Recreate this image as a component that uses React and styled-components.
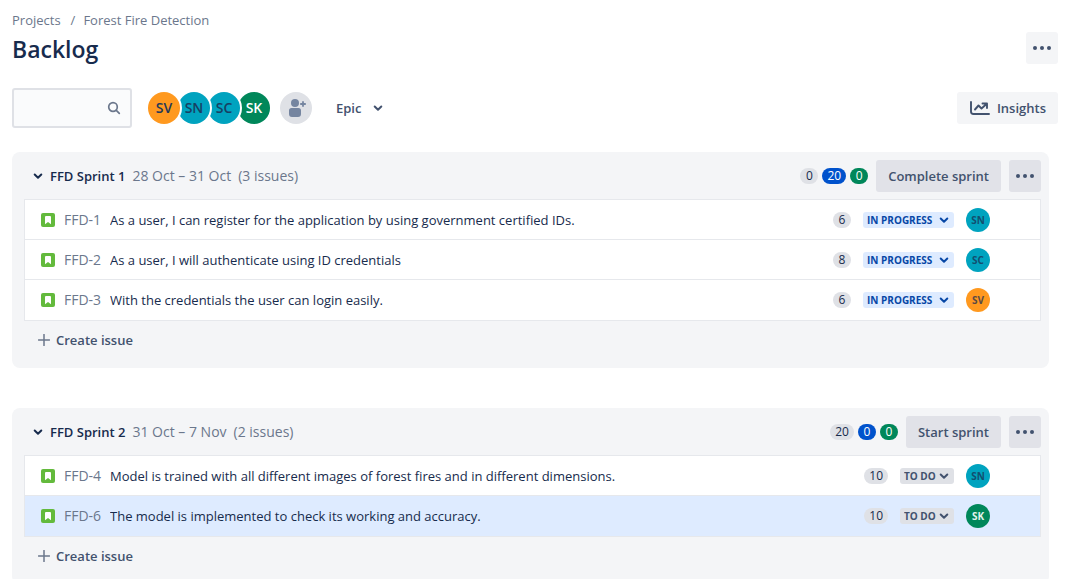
import React from "react";
import styled, { createGlobalStyle } from "styled-components";

const GlobalStyle = createGlobalStyle`
  * { box-sizing: border-box; }
  body {
    margin: 0;
    background: #ffffff;
    color: #172b4d;
    font-family: "Open Sans", "Noto Sans", sans-serif;
    font-size: 13px;
    line-height: 20px;
  }
  button, input, select { font: inherit; color: inherit; }
  a { color: inherit; text-decoration: none; }
  h1, h2, ul, ol, p { margin: 0; padding: 0; }
  ul, ol { list-style: none; }
`;

const Page = styled.main`
  height: 100vh;
  overflow-y: auto;
  scrollbar-width: none;
  padding: 10px 16px 24px 12px;
`;

const Crumbs = styled.ol`
  display: flex;
  color: #6b778c;

  li + li::before {
    content: "/";
    margin: 0 8px 0 10px;
  }
`;

const TitleRow = styled.div`
  display: flex;
  align-items: center;
  justify-content: space-between;
  margin-top: 2px;
`;

const Title = styled.h1`
  padding-top: 2px;
  font-size: 23px;
  line-height: 30px;
  font-weight: 600;
`;

const Button = styled.button`
  display: flex;
  align-items: center;
  justify-content: center;
  gap: ${(p) => p.$gap || 4}px;
  height: 32px;
  padding: 0 12px;
  border: 0;
  border-radius: 3px;
  background: ${(p) => (p.$subtle ? "#f4f5f7" : "#e1e2e8")};
  color: #42526e;
  font-weight: 600;
  white-space: nowrap;
`;

const IconButton = styled(Button)`
  width: 32px;
  padding: 0;
`;

const PlainButton = styled(Button)`
  background: transparent;
  padding: 0;
`;

const Toolbar = styled.div`
  display: flex;
  align-items: center;
  justify-content: space-between;
  margin-top: 24px;
`;

const Filters = styled.div`
  display: flex;
  align-items: center;
`;

const SearchBox = styled.label`
  display: flex;
  align-items: center;
  width: 120px;
  height: 40px;
  padding: 0 8px;
  border: 2px solid #dfe1e6;
  border-radius: 3px;
  background: #fafbfc;
  color: #6b778c;

  input {
    flex: 1;
    min-width: 0;
    border: 0;
    outline: 0;
    padding: 0;
    background: transparent;
  }
`;

const People = styled.ul`
  display: flex;
  isolation: isolate;
  margin: 0 10px 0 16px;

  li { position: relative; }
  li + li { margin-left: -2px; }
`;

const tones = {
  orange: { fill: "#ff991f", text: "#253858", smallText: "#5a4a45" },
  teal: { fill: "#00a3bf", text: "#173f63", smallText: "#124f70" },
  green: { fill: "#00875a", text: "#ffffff", smallText: "#e3f3ed" },
};

const Avatar = styled.span`
  display: flex;
  align-items: center;
  justify-content: center;
  width: ${(p) => (p.$small ? 24 : 32)}px;
  height: ${(p) => (p.$small ? 24 : 32)}px;
  border-radius: 50%;
  background: ${(p) => tones[p.$tone].fill};
  color: ${(p) => (p.$small ? tones[p.$tone].smallText : tones[p.$tone].text)};
  font-size: ${(p) => (p.$small ? 10 : 14)}px;
  font-weight: ${(p) => (p.$small ? 700 : 600)};
`;

const RingedAvatar = styled(Avatar)`
  box-shadow: 0 0 0 2px #ffffff;
`;

const AddPeople = styled.button`
  display: flex;
  align-items: center;
  justify-content: center;
  width: 32px;
  height: 32px;
  margin-right: 24px;
  padding: 0;
  border: 0;
  border-radius: 50%;
  background: #dfe1e6;
  color: #7585a0;
`;

const Sprints = styled.div`
  display: flex;
  flex-direction: column;
  gap: 40px;
  margin: 24px 9px 0 0;
`;

const Panel = styled.section`
  padding: 8px 8px 8px 12px;
  border-radius: 8px;
  background: #f4f5f7;
`;

const PanelHeader = styled.header`
  display: flex;
  align-items: center;
  gap: 8px;
  margin-bottom: 7px;
`;

const Toggle = styled.button`
  display: flex;
  align-items: center;
  justify-content: center;
  width: 20px;
  height: 20px;
  margin-left: 4px;
  padding: 0;
  border: 0;
  background: transparent;
`;

const Heading = styled.div`
  display: flex;
  flex: 1;
  gap: 7px;
  margin-left: -6px;
  color: #6b778c;
  font-size: 14px;
  white-space: nowrap;

  h2 {
    color: #172b4d;
    font-size: 13px;
    line-height: 20px;
    font-weight: 600;
  }
`;

const Badges = styled.div`
  display: flex;
  gap: 4px;
`;

const badgeTones = {
  grey: ["#dfe1e6", "#172b4d"],
  blue: ["#0052cc", "#ffffff"],
  green: ["#00875a", "#ffffff"],
};

const Badge = styled.span`
  min-width: 18px;
  padding: 0 5px;
  border-radius: 8px;
  background: ${(p) => badgeTones[p.$tone || "grey"][0]};
  color: ${(p) => badgeTones[p.$tone || "grey"][1]};
  font-size: 12px;
  line-height: 16px;
  text-align: center;
`;

const Issues = styled.ul`
  border: 1px solid #e6e8ec;
  background: #ffffff;
`;

const Issue = styled.li`
  display: flex;
  align-items: center;
  height: 40px;
  padding: 0 50px 0 16px;
  background: ${(p) => (p.$selected ? "#deebff" : "#ffffff")};

  &:not(:last-child) { box-shadow: inset 0 -1px #e6e8ec; }
`;

const IssueKey = styled.a`
  width: 38px;
  margin: 0 8px 0 9px;
  color: #6b778c;
  font-size: 14px;
  white-space: nowrap;
`;

const Summary = styled.p`
  flex: 1;
  min-width: 0;
  overflow: hidden;
  white-space: nowrap;
  text-overflow: ellipsis;
`;

const IssueMeta = styled.div`
  display: flex;
  align-items: center;
  gap: 12px;
`;

const Status = styled.span`
  display: grid;
  align-items: center;
  width: ${(p) => (p.$progress ? 91 : 54)}px;
  height: 16px;
  border-radius: 3px;
  background: ${(p) => (p.$progress ? "#deebff" : "#dfe1e6")};
  color: ${(p) => (p.$progress ? "#0747a6" : "#42526e")};

  select, svg { grid-area: 1 / 1; }
  select {
    appearance: none;
    width: 100%;
    height: 16px;
    padding: 0 0 0 4px;
    border: 0;
    background: transparent;
    font-size: 10px;
    line-height: 16px;
    font-weight: 700;
  }
  svg {
    justify-self: end;
    margin-right: 5px;
    pointer-events: none;
  }
`;

const CreateRow = styled.div`
  padding: 3px 0 4px 14px;
`;

const Chevron = () => (
  <svg width="10" height="10" viewBox="0 0 10 10" fill="none" stroke="currentColor" strokeWidth="2" strokeLinecap="round" strokeLinejoin="round" aria-hidden="true">
    <path d="M1.7 3.5 5 6.7 8.3 3.5" />
  </svg>
);

const Dots = () => (
  <svg width="20" height="8" viewBox="0 0 20 8" fill="currentColor" aria-hidden="true">
    <circle cx="3" cy="4" r="2" />
    <circle cx="10" cy="4" r="2" />
    <circle cx="17" cy="4" r="2" />
  </svg>
);

const SearchIcon = () => (
  <svg width="16" height="16" viewBox="0 0 16 16" fill="none" stroke="currentColor" strokeWidth="1.7" strokeLinecap="round" aria-hidden="true">
    <circle cx="7" cy="7" r="4.3" />
    <path d="m10.3 10.3 3 3" />
  </svg>
);

const PersonAddIcon = () => (
  <svg width="20" height="20" viewBox="0 0 20 20" fill="currentColor" aria-hidden="true">
    <circle cx="9" cy="5" r="4" />
    <path d="M3 12.500a2.500 2.500 0 0 1 2.500-2.500h7a2.500 2.500 0 0 1 2.500 2.500V16a3 3 0 0 1-3 3H6a3 3 0 0 1-3-3Z" />
    <path d="M17 3.200v5.600M14.200 6h5.600" stroke="currentColor" strokeWidth="1.800" />
  </svg>
);

const ChartIcon = () => (
  <svg width="22" height="16" viewBox="0 0 22 16" fill="none" stroke="currentColor" strokeWidth="1.900" strokeLinecap="round" strokeLinejoin="round" aria-hidden="true">
    <path d="M2 2v9.500A2.500 2.500 0 0 0 4.500 14H20" />
    <path d="m6 9.500 3.500-4 3 3L17.500 4M13.500 3.500h4.500V8" />
  </svg>
);

const PlusIcon = () => (
  <svg width="12" height="12" viewBox="0 0 12 12" stroke="#6b778c" strokeWidth="1.500" strokeLinecap="round" aria-hidden="true">
    <path d="M6 .5v11M.5 6h11" />
  </svg>
);

const StoryIcon = () => (
  <svg width="14" height="14" viewBox="0 0 14 14" role="img" aria-label="Story">
    <rect width="14" height="14" rx="2" fill="#63ba3c" />
    <path d="M4 4a1 1 0 0 1 1-1h4a1 1 0 0 1 1 1v7.200L7 8.900 4 11.200Z" fill="#ffffff" />
  </svg>
);

const people = [
  ["SV", "orange"],
  ["SN", "teal"],
  ["SC", "teal"],
  ["SK", "green"],
];
const toneOf = Object.fromEntries(people);

const sprints = [
  {
    name: "FFD Sprint 1",
    dates: "28 Oct – 31 Oct",
    count: "(3 issues)",
    totals: [0, 20, 0],
    action: "Complete sprint",
    issues: [
      { key: "FFD-1", text: "As a user, I can register for the application by using government certified IDs.", points: 6, status: "IN PROGRESS", who: "SN" },
      { key: "FFD-2", text: "As a user, I will authenticate using ID credentials", points: 8, status: "IN PROGRESS", who: "SC" },
      { key: "FFD-3", text: "With the credentials the user can login easily.", points: 6, status: "IN PROGRESS", who: "SV" },
    ],
  },
  {
    name: "FFD Sprint 2",
    dates: "31 Oct – 7 Nov",
    count: "(2 issues)",
    totals: [20, 0, 0],
    action: "Start sprint",
    issues: [
      { key: "FFD-4", text: "Model is trained with all different images of forest fires and in different dimensions.", points: 10, status: "TO DO", who: "SN" },
      { key: "FFD-6", text: "The model is implemented to check its working and accuracy.", points: 10, status: "TO DO", who: "SK", selected: true },
    ],
  },
];

function IssueRow({ issue }) {
  return (
    <Issue $selected={issue.selected}>
      <StoryIcon />
      <IssueKey href={`#${issue.key}`}>{issue.key}</IssueKey>
      <Summary>{issue.text}</Summary>
      <IssueMeta>
        <Badge>{issue.points}</Badge>
        <Status $progress={issue.status === "IN PROGRESS"}>
          <select aria-label={`Status of ${issue.key}`} defaultValue={issue.status}>
            <option>{issue.status}</option>
          </select>
          <Chevron />
        </Status>
        <Avatar $small $tone={toneOf[issue.who]}>{issue.who}</Avatar>
      </IssueMeta>
    </Issue>
  );
}

function Sprint({ sprint }) {
  return (
    <Panel>
      <PanelHeader>
        <Toggle aria-label={`Collapse ${sprint.name}`} aria-expanded="true">
          <Chevron />
        </Toggle>
        <Heading>
          <h2>{sprint.name}</h2>
          <span>{sprint.dates}</span>
          <span>{sprint.count}</span>
        </Heading>
        <Badges>
          <Badge>{sprint.totals[0]}</Badge>
          <Badge $tone="blue">{sprint.totals[1]}</Badge>
          <Badge $tone="green">{sprint.totals[2]}</Badge>
        </Badges>
        <Button>{sprint.action}</Button>
        <IconButton aria-label="Sprint actions"><Dots /></IconButton>
      </PanelHeader>
      <Issues>
        {sprint.issues.map((issue) => <IssueRow key={issue.key} issue={issue} />)}
      </Issues>
      <CreateRow>
        <PlainButton $gap={6}><PlusIcon />Create issue</PlainButton>
      </CreateRow>
    </Panel>
  );
}

export default function App() {
  return (
    <>
      <GlobalStyle />
      <Page>
        <nav aria-label="Breadcrumbs">
          <Crumbs>
            <li><a href="#projects">Projects</a></li>
            <li><a href="#project">Forest Fire Detection</a></li>
          </Crumbs>
        </nav>
        <TitleRow>
          <Title>Backlog</Title>
          <IconButton $subtle aria-label="Board actions"><Dots /></IconButton>
        </TitleRow>
        <Toolbar>
          <Filters>
            <SearchBox>
              <input type="text" aria-label="Search backlog" />
              <SearchIcon />
            </SearchBox>
            <People>
              {people.map(([name, tone], i) => (
                <li key={name} style={{ zIndex: people.length - i }}>
                  <RingedAvatar $tone={tone}>{name}</RingedAvatar>
                </li>
              ))}
            </People>
            <AddPeople aria-label="Add people"><PersonAddIcon /></AddPeople>
            <PlainButton $gap={12} aria-haspopup="listbox">Epic<Chevron /></PlainButton>
          </Filters>
          <Button $subtle $gap={6}><ChartIcon />Insights</Button>
        </Toolbar>
        <Sprints>
          {sprints.map((sprint) => <Sprint key={sprint.name} sprint={sprint} />)}
        </Sprints>
      </Page>
    </>
  );
}
